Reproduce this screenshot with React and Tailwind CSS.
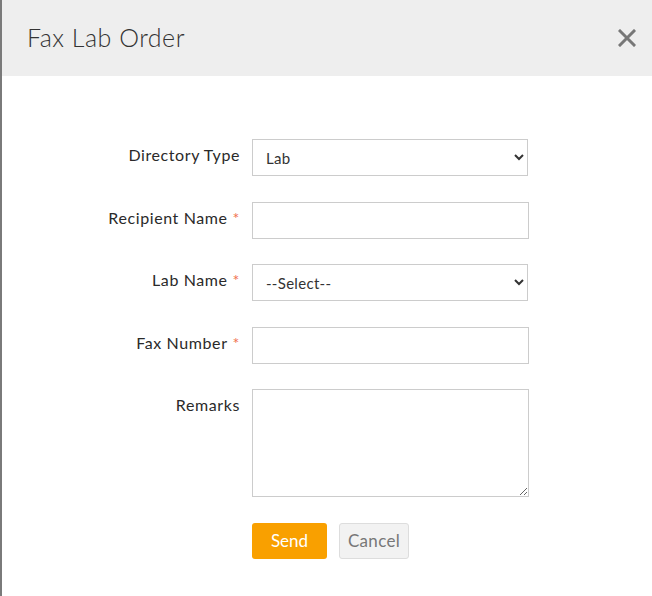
import React from 'react';

const FIELD = 'block h-[37px] w-[277px] border border-[#cccccc] bg-white px-[11px] text-[15px] text-[#333333] outline-none';
const SELECT = 'block h-[37px] w-[276px] border border-[#cccccc] bg-white pl-[9px] pr-[4px] text-[15px] tracking-[0.3px] text-[#333333] outline-none';

function Label({ children, required }) {
  return (
    <label className="w-[250px] shrink-0 pr-[12px] pt-[5px] text-right text-[16px] leading-[22px] tracking-[0.6px] text-[#2a2a2a]">
      {children}
      {required && <span className="ml-[5px] text-[#f0714f]">*</span>}
    </label>
  );
}

export default function App() {
  return (
    <div
      className="flex h-[596px] w-[652px] flex-col border-l-2 border-[#7a7a7a] bg-white"
      style={{ fontFamily: 'Lato, "Open Sans", sans-serif' }}
    >
      {/* Header */}
      <div className="flex h-[76px] items-center justify-between bg-[#eeeeee] pl-[25px] pr-[13px]">
        <h2 className="text-[25px] font-light tracking-[0.5px] text-[#333333]">Fax Lab Order</h2>
        <button className="flex h-[24px] w-[24px] items-center justify-center">
          <svg width="18" height="18" viewBox="0 0 18 18">
            <path d="M2 2L16 16M16 2L2 16" stroke="#777777" strokeWidth="3" strokeLinecap="square" />
          </svg>
        </button>
      </div>

      {/* Form */}
      <div className="flex flex-col gap-[25.5px] pt-[63px]">
        <div className="flex">
          <Label>Directory Type</Label>
          <select className={SELECT} defaultValue="Lab">
            <option>Lab</option>
            <option>Pharmacy</option>
          </select>
        </div>
        <div className="flex">
          <Label required>Recipient Name</Label>
          <input className={FIELD} />
        </div>
        <div className="flex">
          <Label required>Lab Name</Label>
          <select className={SELECT} defaultValue="">
            <option value="">--Select--</option>
          </select>
        </div>
        <div className="flex">
          <Label required>Fax Number</Label>
          <input className={FIELD} />
        </div>
        <div className="flex">
          <Label>Remarks</Label>
          <textarea className="block h-[108px] w-[277px] border border-[#cccccc] bg-white px-[11px] py-[6px] text-[15px] text-[#333333] outline-none" />
        </div>
        <div className="flex gap-[12px] pl-[250px]">
          <button className="h-[36px] w-[75px] rounded-[3px] bg-[#f9a000] text-[17px] text-white">Send</button>
          <button className="h-[36px] w-[70px] rounded-[3px] border border-[#dddddd] bg-[#f2f2f2] text-[17px] tracking-[0.3px] text-[#777777]">Cancel</button>
        </div>
      </div>
    </div>
  );
}
